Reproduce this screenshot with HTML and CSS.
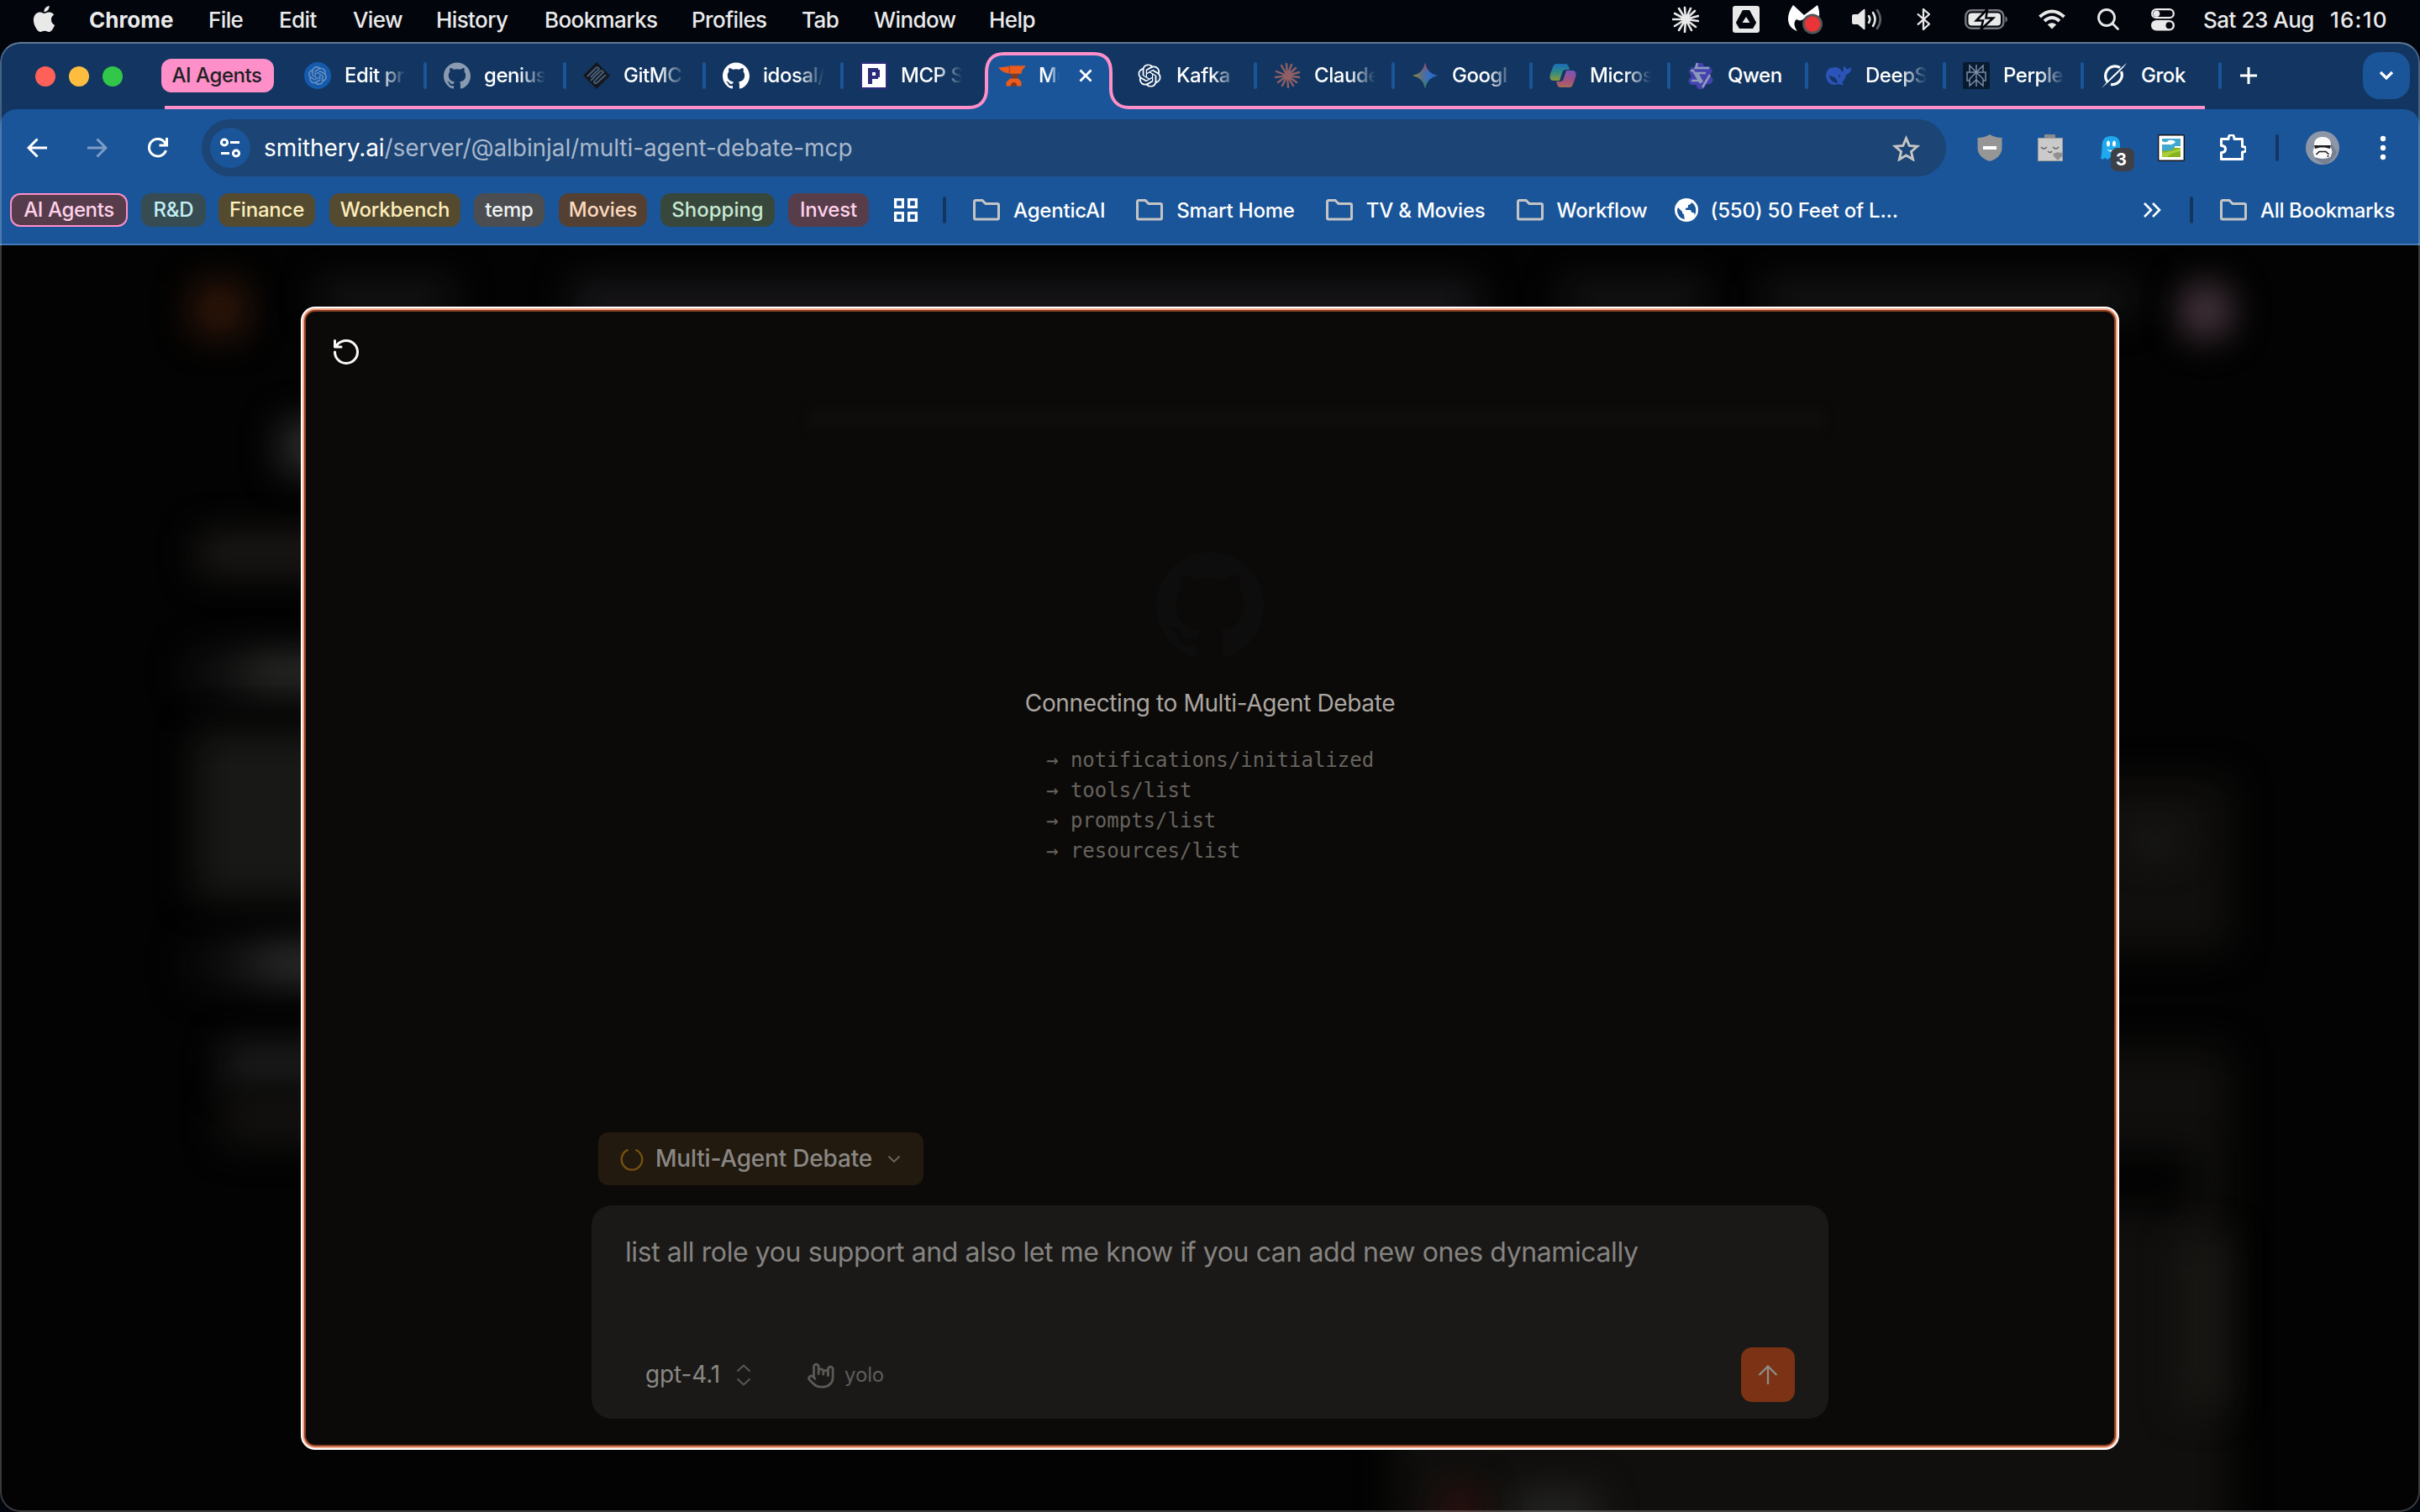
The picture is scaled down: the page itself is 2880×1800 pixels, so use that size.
FILE: index.html
```html
<!DOCTYPE html>
<html lang="en">
<head>
<meta charset="utf-8">
<title>Multi-Agent Debate</title>
<link rel="stylesheet" href="styles.css">
</head>
<body>
<svg class="defs" width="0" height="0" aria-hidden="true">
  <symbol id="github" viewBox="0 0 24 24"><path d="M12 .297c-6.63 0-12 5.373-12 12 0 5.303 3.438 9.8 8.205 11.385.6.113.82-.258.82-.577 0-.285-.01-1.04-.015-2.04-3.338.724-4.042-1.61-4.042-1.61C4.422 18.07 3.633 17.7 3.633 17.7c-1.087-.744.084-.729.084-.729 1.205.084 1.838 1.236 1.838 1.236 1.07 1.835 2.809 1.305 3.495.998.108-.776.417-1.305.76-1.605-2.665-.3-5.466-1.332-5.466-5.93 0-1.31.465-2.38 1.235-3.22-.135-.303-.54-1.523.105-3.176 0 0 1.005-.322 3.3 1.23.96-.267 1.98-.399 3-.405 1.02.006 2.04.138 3 .405 2.28-1.552 3.285-1.23 3.285-1.23.645 1.653.24 2.873.12 3.176.765.84 1.23 1.91 1.23 3.22 0 4.61-2.805 5.625-5.475 5.92.42.36.81 1.096.81 2.22 0 1.606-.015 2.896-.015 3.286 0 .315.21.69.825.57C20.565 22.092 24 17.592 24 12.297c0-6.627-5.373-12-12-12"/></symbol>
  <symbol id="openai" viewBox="0 0 24 24"><path d="M22.2819 9.8211a5.9847 5.9847 0 0 0-.5157-4.9108 6.0462 6.0462 0 0 0-6.5098-2.9A6.0651 6.0651 0 0 0 4.9807 4.1818a5.9847 5.9847 0 0 0-3.9977 2.9 6.0462 6.0462 0 0 0 .7427 7.0966 5.98 5.98 0 0 0 .511 4.9107 6.051 6.051 0 0 0 6.5146 2.9001A5.9847 5.9847 0 0 0 13.2599 24a6.0557 6.0557 0 0 0 5.7718-4.2058 5.9894 5.9894 0 0 0 3.9977-2.9001 6.0557 6.0557 0 0 0-.7475-7.0729zm-9.022 12.6081a4.4755 4.4755 0 0 1-2.8764-1.0408l.1419-.0804 4.7783-2.7582a.7948.7948 0 0 0 .3927-.6813v-6.7369l2.02 1.1686a.071.071 0 0 1 .038.052v5.5826a4.504 4.504 0 0 1-4.4945 4.4944zm-9.6607-4.1254a4.4708 4.4708 0 0 1-.5346-3.0137l.142.0852 4.783 2.7582a.7712.7712 0 0 0 .7806 0l5.8428-3.3685v2.3324a.0804.0804 0 0 1-.0332.0615L9.74 19.9502a4.4992 4.4992 0 0 1-6.1408-1.6464zM2.3408 7.8956a4.485 4.485 0 0 1 2.3655-1.9728V11.6a.7664.7664 0 0 0 .3879.6765l5.8144 3.3543-2.0201 1.1685a.0757.0757 0 0 1-.071 0l-4.8303-2.7865A4.504 4.504 0 0 1 2.3408 7.872zm16.5963 3.8558L13.1038 8.364 15.1192 7.2a.0757.0757 0 0 1 .071 0l4.8303 2.7913a4.4944 4.4944 0 0 1-.6765 8.1042v-5.6772a.79.79 0 0 0-.407-.667zm2.0107-3.0231l-.142-.0852-4.7735-2.7818a.7759.7759 0 0 0-.7854 0L9.409 9.2297V6.8974a.0662.0662 0 0 1 .0284-.0615l4.8303-2.7866a4.4992 4.4992 0 0 1 6.6802 4.66zM8.3065 12.863l-2.02-1.1638a.0804.0804 0 0 1-.038-.0567V6.0742a4.4992 4.4992 0 0 1 7.3757-3.4537l-.142.0805L8.704 5.459a.7948.7948 0 0 0-.3927.6813zm1.0976-2.3654l2.602-1.4998 2.6069 1.4998v2.9994l-2.5974 1.4997-2.6067-1.4997Z"/></symbol>
  <symbol id="folder" viewBox="0 0 32 32"><path d="M1.500 25.500V6a1.500 1.500 0 0 1 1.500-1.500H11l4 4H29a1.500 1.500 0 0 1 1.500 1.500V25.500a1.500 1.500 0 0 1-1.500 1.500H3a1.500 1.500 0 0 1-1.500-1.500Z" fill="none" stroke="#c5c5c5" stroke-width="3"/></symbol>
</svg>

<header class="menubar">
  <nav class="menus">
    <svg class="apple" viewBox="0 0 24 24"><path fill="#e9e9ea" d="M12.152 6.896c-.948 0-2.415-1.078-3.96-1.04-2.04.027-3.91 1.183-4.961 3.014-2.117 3.675-.546 9.103 1.519 12.09 1.013 1.454 2.208 3.09 3.792 3.039 1.52-.065 2.09-.987 3.935-.987 1.831 0 2.35.987 3.96.948 1.637-.026 2.676-1.48 3.676-2.948 1.156-1.688 1.636-3.325 1.662-3.415-.039-.013-3.182-1.221-3.22-4.857-.026-3.04 2.48-4.494 2.597-4.559-1.429-2.09-3.623-2.324-4.39-2.376-2-.156-3.675 1.09-4.61 1.09zM15.53 3.83c.843-1.012 1.4-2.427 1.245-3.83-1.207.052-2.662.805-3.532 1.818-.78.896-1.454 2.338-1.273 3.714 1.338.104 2.715-.688 3.559-1.701"/></svg>
    <b>Chrome</b><span>File</span><span>Edit</span><span>View</span><span>History</span><span>Bookmarks</span><span>Profiles</span><span>Tab</span><span>Window</span><span>Help</span>
  </nav>
  <div class="status">
    <svg width="32" height="32" viewBox="-16 -16 32 32" stroke="#e9e9ea" stroke-width="2.600" stroke-linecap="round"><path d="M0 0L-1 -14M0 0L6 -13M0 0L11 -10M0 0L15 -4M0 0L15 2M0 0L12 9M0 0L7 13M0 0L-1 15M0 0L-8 13M0 0L-13 8M0 0L-15 0M0 0L-13 -7M0 0L-8 -13"/></svg>
    <svg width="32" height="32" viewBox="0 0 32 32"><rect width="32" height="32" rx="3" fill="#e9e9ea"/><path d="M12.500 6h7l7.500 14-3.500 6h-15L5 20Z" fill="#02050c" stroke="#02050c" stroke-width="2" stroke-linejoin="round"/><path d="M16 13l4.500 7h-9Z" fill="#e9e9ea"/></svg>
    <svg width="42" height="36" viewBox="0 0 42 36"><path d="M7 1C-3 15 0 28 12 32c-5-6-4-12-1-14 3 2 6 2 9-1 4 4 4 10 1 15 14-3 21-15 15-31L20 13Z" fill="#fff"/><circle cx="30" cy="23.500" r="12" fill="#555557"/><circle cx="30" cy="23.500" r="9.300" fill="#e93538"/></svg>
    <svg width="36" height="26" viewBox="0 0 36 26" fill="none" stroke="#e9e9ea" stroke-width="2.600" stroke-linecap="round"><path d="M0 9q0-2 2-2h5L14 1q1.500-1 1.500 1V24q0 2-1.500 1L7 19H2q-2 0-2-2Z" fill="#e9e9ea" stroke="none"/><path d="M20 9q2.500 4 0 8"/><path d="M25 5q5 8 0 16"/><path d="M30 2q7.500 11 0 22" stroke="#5d6067"/></svg>
    <svg width="16" height="28" viewBox="0 0 16 28" fill="none" stroke="#e9e9ea" stroke-width="2.300" stroke-linejoin="round"><path d="M1 7.500L15 19.500L8 26V2L15 8L1 20.500"/></svg>
    <svg width="52" height="26" viewBox="0 0 52 26"><rect x="1.300" y="2.300" width="45" height="21.500" rx="7" fill="none" stroke="#77797e" stroke-width="2.400"/><rect x="4.500" y="5.500" width="38.500" height="15" rx="4" fill="#e9e9ea"/><path d="M48.500 9q5 4 0 8Z" fill="#77797e"/><path d="M27 1L14 14.500h8L19.500 25 34 11.500h-8.500Z" fill="#e9e9ea" stroke="#02050c" stroke-width="2.600"/></svg>
    <svg width="32" height="26" viewBox="0 0 32 26" fill="none" stroke="#e9e9ea" stroke-width="4"><path d="M1.500 10Q16-3 30.500 10"/><path d="M7 15Q16 7 25 15"/><path d="M10.800 19.300Q16 15 21.200 19.300L16 24.500Z" fill="#e9e9ea" stroke="none"/></svg>
    <svg width="28" height="28" viewBox="0 0 28 28" fill="none" stroke="#e9e9ea" stroke-width="2.800" stroke-linecap="round"><circle cx="12" cy="12" r="9.500"/><path d="M19 19l6.500 6.500"/></svg>
    <svg width="28" height="28" viewBox="0 0 28 28"><rect x="1.200" y="2.200" width="25.600" height="10" rx="5" fill="none" stroke="#e9e9ea" stroke-width="2.300"/><circle cx="6.500" cy="7.200" r="3.800" fill="#e9e9ea"/><rect y="15" width="28" height="12.500" rx="6.200" fill="#e9e9ea"/><circle cx="21.500" cy="21.200" r="4" fill="#02050c"/></svg>
    <span class="date">Sat 23 Aug</span><span class="time">16:10</span>
  </div>
</header>

<div class="window">
  <div class="tabstrip">
    <svg class="outline" width="2880" height="80" viewBox="0 50 2880 80"><path d="M1153 130C1168 128 1175 118 1175 104V86C1175 72 1181 64 1195 64H1302C1316 64 1322 72 1322 86V104C1322 118 1329 128 1344 130Z" fill="#1a5599"/><path d="M196 128H1153C1168 128 1174 118 1174 106V86C1174 72 1181 64 1195 64H1302C1316 64 1322 72 1322 86V106C1322 118 1329 128 1344 128H2624" fill="none" stroke="#ff8fc8" stroke-width="4"/></svg>
    <div class="lights"><i class="red"></i><i class="amber"></i><i class="green"></i></div>
    <span class="group">AI Agents</span>
    <div class="tabs">
      <div class="tab"><svg viewBox="0 0 32 32"><circle cx="16" cy="16" r="16" fill="#145bad"/><use href="#openai" x="5" y="5" width="22" height="22" fill="#6f93c0"/></svg><span>Edit pr</span></div>
      <div class="tab"><svg fill="#8a9bb0"><use href="#github"/></svg><span>genius</span></div>
      <div class="tab"><svg viewBox="0 0 32 32"><path d="M16 0L32 16 16 32 0 16Z" fill="#14171c"/><path d="M5 17L15 7q3-2 4 1L9 18M9 22L20 11q3-2 4 1L13 23q0 3 3 2L27 15" fill="none" stroke="#49607d" stroke-width="1.800"/></svg><span>GitMC</span></div>
      <div class="tab"><svg fill="#fff"><use href="#github"/></svg><span>idosal/</span></div>
      <div class="tab before"><svg viewBox="0 0 32 32"><rect x="1" y="1" width="30" height="30" fill="#fff" stroke="#2d2c7c" stroke-width="2"/><path d="M9 7h12v2h2v9h-2v2h-7v6H9Zm5 5v4h4v-4Z" fill="#2d2c7c" fill-rule="evenodd"/></svg><span>MCP S</span></div>
      <div class="tab active"><svg viewBox="0 0 32 32"><path d="M0 6.500L13 5V4.200H32V6Q28 8 27.500 13.800H17Q6 14 0 6.500Z" fill="#ea5b1c"/><path d="M13.300 5v8.500" stroke="#a8421a" stroke-width="1"/><path d="M14 14h11l-2.500 5.500h-6Z" fill="#7f3a22"/><path d="M14 19.500h10q2.500 3 3.500 4v5H22q-3.500-5-7 0H9.500v-5Q12 22 14 19.500Z" fill="#ea5b1c"/><path d="M14.500 28.500q1-4.500 4-4.500t4 4.500Z" fill="#8d3518"/></svg><span>Mu</span><svg class="close" viewBox="0 0 16 16"><path d="M1.500 1.500l13 13m0-13l-13 13" stroke="#fff" stroke-width="2.800"/></svg></div>
      <div class="tab"><svg fill="#fff" viewBox="-2 -2 28 28"><use href="#openai" width="24" height="24"/></svg><span>Kafka</span></div>
      <div class="tab"><svg viewBox="-16 -16 32 32" stroke="#8f5f64" stroke-width="2.400" stroke-linecap="round"><path d="M0 0L-1-14M0 0L5-13M0 0L10-9M0 0L14-4M0 0L14 2M0 0L11 8M0 0L7 12M0 0L1 14M0 0L-6 12M0 0L-11 8M0 0L-14 2M0 0L-13-5M0 0L-7-12"/></svg><span>Claude</span></div>
      <div class="tab"><svg viewBox="0 0 32 32"><defs><linearGradient id="gem" x1="0" y1="0" x2="1" y2="0"><stop offset="0" stop-color="#9a8a36"/><stop offset=".35" stop-color="#5c6f83"/><stop offset=".6" stop-color="#3a6fc0"/><stop offset="1" stop-color="#2461b4"/></linearGradient><linearGradient id="gem2" x1="0" y1="0" x2="0" y2="1"><stop offset="0" stop-color="#a4485d"/><stop offset=".4" stop-color="#a4485d" stop-opacity="0"/><stop offset=".65" stop-color="#27894d" stop-opacity="0"/><stop offset="1" stop-color="#27894d"/></linearGradient></defs><path d="M16 1Q18.500 13.500 31 16 18.500 18.500 16 31 13.500 18.500 1 16 13.500 13.500 16 1Z" fill="url(#gem)"/><path d="M16 1Q18.500 13.500 31 16 18.500 18.500 16 31 13.500 18.500 1 16 13.500 13.500 16 1Z" fill="url(#gem2)"/></svg><span>Googl</span></div>
      <div class="tab"><svg viewBox="0 0 32 32"><defs><linearGradient id="coa" x1="0" y1="0" x2="0" y2="1"><stop offset="0" stop-color="#1c6cb8"/><stop offset=".5" stop-color="#2f8b86"/><stop offset="1" stop-color="#8b9a3c"/></linearGradient><linearGradient id="cob" x1="0" y1="0" x2="0" y2="1"><stop offset="0" stop-color="#7a56b8"/><stop offset=".6" stop-color="#a2507f"/><stop offset="1" stop-color="#aa6a58"/></linearGradient></defs><path d="M8 2h11q3 0 4 4l1 3h-5q-3 0-4 4l-3 9H5Q-1 22 1 14L4 6Q5 2 8 2Z" fill="url(#coa)"/><path d="M24 30H13q-3 0-4-4l-1-3h5q3 0 4-4l3-9h7q6 0 4 8l-3 8q-1 4-4 4Z" fill="url(#cob)"/></svg><span>Micros</span></div>
      <div class="tab whole"><svg viewBox="0 0 32 32"><path d="M12 1h6l2 4h7l3 6-3 4 4 6-3 5h-5l-4 6h-6l-3-5H4l-3-5 4-5-3-6 3-5h5Z" fill="#4542b0"/><path d="M12 1l-2 6h16M27 15l-9 15M16 25L7 10H4m1 12h9m8-9H12l6 11" fill="none" stroke="#8e9cba" stroke-width="2.600"/></svg><span>Qwen</span></div>
      <div class="tab"><svg viewBox="0 0 32 32"><path d="M1 17Q1 6 12 6q5 0 8 5 2 1 2-2-1-5 1-4 2 4 5 3 3-3 3-1 0 6-6 8-1 6-5 9 3 2 1 3-3 0-5-1Q3 30 1 17Zm4-1q1 6 6 8 3 2 4 0-2-7-10-8Zm11-1q0 3 2 3 1-2-2-3Z" fill="#2c53b8" fill-rule="evenodd"/></svg><span>DeepS</span></div>
      <div class="tab"><svg viewBox="0 0 32 32"><rect width="32" height="32" rx="2" fill="#071a30"/><path d="M16 3v26M8 4l8 8 8-8v8H8ZM8 12H5v10h3M24 12h3v10h-3M16 12l-8 8v8l8-7 8 7v-8Z" fill="none" stroke="#788ba4" stroke-width="1.500"/></svg><span>Perple</span></div>
      <div class="tab whole"><svg viewBox="0 0 32 32"><path d="M8.500 24A11.500 11.500 0 0 1 23 6.500M24.500 11A11.500 11.500 0 0 1 12 26.500" fill="none" stroke="#fff" stroke-width="3.200"/><path d="M31 1Q26 9 1 31 14 15 31 1Z" fill="#fff"/></svg><span>Grok</span></div>
    </div>
    <svg class="plus" viewBox="0 0 22 22"><path d="M11 1v20M1 11h20" stroke="#fff" stroke-width="3"/></svg>
    <div class="tabsearch"><svg width="18" height="12" viewBox="0 0 18 12"><path d="M2 2l7 7 7-7" fill="none" stroke="#fff" stroke-width="3.200"/></svg></div>
  </div>

  <div class="chrome">
    <div class="toolbar">
      <div class="navbtns">
        <svg viewBox="0 0 24 24" stroke="#fff"><path d="M24 12H2M12.500 1.500L2 12l10.500 10.500"/></svg>
        <svg viewBox="0 0 24 24" stroke="#7d9dc5"><path d="M0 12h22M11.500 1.500L22 12 11.500 22.500"/></svg>
        <svg viewBox="0 0 24 24" stroke="#fff"><path d="M21.500 15A10.300 10.300 0 1 1 20 5.500L22.500 8.500M22.500 0V9H13.500"/></svg>
      </div>
      <div class="omnibox">
        <span class="siteinfo"><svg width="26" height="24" viewBox="0 0 26 24" fill="none" stroke="#fff" stroke-width="3"><circle cx="6" cy="5.500" r="3.600"/><path d="M13 5.500h11M2 18.500h10"/><circle cx="20" cy="18.500" r="3.600"/></svg></span>
        <span class="url">smithery.ai<em>/server/@albinjal/multi-agent-debate-mcp</em></span>
        <svg class="star" viewBox="0 0 32 30"><path d="M16 3.500l3.600 8.500 9.200.8-7 6.100 2.100 9L16 23.200 8.100 27.900l2.100-9-7-6.100 9.200-.8Z" fill="none" stroke="#c5c5c5" stroke-width="2.800"/></svg>
      </div>
      <div class="exts">
        <svg viewBox="0 0 32 32"><path d="M16 0q6 4 14.500 4V16q0 11-14.500 16Q1.500 27 1.500 16V4Q10 4 16 0Z" fill="#969696"/><rect x="8" y="14" width="16" height="4" fill="#fff"/></svg>
        <svg viewBox="0 0 32 32"><rect x="9" width="13" height="6" rx="1" fill="#8b8b8b"/><rect x="1.500" y="4.500" width="29" height="27" fill="#cacaca" stroke="#9c9c9c"/><path d="M5 15q3 4 7 0M19 15q4 4 7 0M13 20q3 3 5 0" fill="none" stroke="#6a6a6a" stroke-width="1.600"/><path d="M25 31l-5-5q-2-4 3-4 2-2 4 0 5-1 4 3Z" fill="#919191"/></svg>
        <div class="ghost"><svg viewBox="0 0 32 32"><path d="M4 28Q5.500 24 5.500 13 6 2 16.500 2T27 13V28l-7 1-4-2-4 3-3-2-3 2Z" fill="#1fa8ee"/><ellipse cx="13" cy="11" rx="2" ry="3.500" fill="#fff"/><ellipse cx="20" cy="11" rx="2" ry="3.500" fill="#fff"/><path d="M11 17q5 4 10 0-5 7-10 0Z" fill="#fff"/></svg><b>3</b></div>
        <svg viewBox="0 0 32 32"><rect x=".7" y=".7" width="30.600" height="30.600" rx="1" fill="#fff" stroke="#111" stroke-width="1.400"/><rect x="5" y="5" width="22" height="22" fill="#42a9cd"/><path d="M5 8q5 3 8-1 6-1 8 2-3 4-7 3H5Zm15 6h7v3h-7Z" fill="#fff"/><path d="M5 19q12 2 14-3h8v11H5Z" fill="#88b31e"/><path d="M5 22q12-2 22-5v3q-12 2-16 7H5Z" fill="#a9d03a"/></svg>
        <svg viewBox="0 0 32 32"><path d="M2.500 5.500h8.500q0-5 3.500-5t3.500 5h9.500v9q4.500 0 4.500 3.200T27.500 21v8.500h-25V21.500q5 0 5-4t-5-4Z" fill="none" stroke="#fff" stroke-width="3" stroke-linejoin="round"/></svg>
      </div>
      <i class="bar"></i>
      <svg class="avatar" viewBox="0 0 40 40"><circle cx="20" cy="20" r="20" fill="#8d96a6"/><path d="M30 14l7 11q-4 11-15 15L11 33Z" fill="#777f91"/><path d="M10 19Q9 7 20 7t10 12l1.500 6-2 6q-9 4-19 0l-2-6Z" fill="#fafafa"/><path d="M10 17h20l-1 4-6-1.500h-6L11 21Z" fill="#1d1d1f"/><path d="M12.500 28l3.500-3.500h8l3.500 3.500" fill="none" stroke="#1d1d1f" stroke-width="1.600"/><circle cx="26.500" cy="30" r="1" fill="#1d1d1f"/></svg>
      <svg class="dots" viewBox="0 0 8 30"><g fill="#fff"><circle cx="4" cy="4" r="3.200"/><circle cx="4" cy="15" r="3.200"/><circle cx="4" cy="26" r="3.200"/></g></svg>
    </div>

    <div class="bookmarks">
      <span class="chip pink">AI Agents</span><span class="chip cyan">R&amp;D</span><span class="chip yellow">Finance</span><span class="chip yellow wide">Workbench</span><span class="chip grey">temp</span><span class="chip orange">Movies</span><span class="chip green">Shopping</span><span class="chip rose">Invest</span>
      <svg class="apps" viewBox="0 0 28 28" fill="none" stroke="#fff" stroke-width="3.200"><rect x="1.600" y="1.600" width="8.800" height="8.800"/><rect x="17.600" y="1.600" width="8.800" height="8.800"/><rect x="1.600" y="17.600" width="8.800" height="8.800"/><rect x="17.600" y="17.600" width="8.800" height="8.800"/></svg>
      <i class="bar"></i>
      <span class="bm"><svg><use href="#folder"/></svg>AgenticAI</span>
      <span class="bm"><svg><use href="#folder"/></svg>Smart Home</span>
      <span class="bm"><svg><use href="#folder"/></svg>TV &amp; Movies</span>
      <span class="bm"><svg><use href="#folder"/></svg>Workflow</span>
      <span class="bm site"><svg viewBox="0 0 28 28"><circle cx="14" cy="14" r="14" fill="#fff"/><path d="M3 15q0-3 1-4l5 5v2q2 0 2 2l1 5Q4 24 3 15ZM20 5q-1 3-4 3v3l-3 1v2h5q2 0 2 3h2q2 0 1.500 3Q26 17 25 12q-1-5-5-7Z" fill="#1a5599"/></svg>(550) 50 Feet of L...</span>
      <svg class="more" viewBox="0 0 22 18"><path d="M2 1l8 8-8 8M12 1l8 8-8 8" fill="none" stroke="#fff" stroke-width="2.600"/></svg>
      <i class="bar"></i>
      <span class="bm"><svg><use href="#folder"/></svg>All Bookmarks</span>
    </div>
  </div>

  <main class="page">
    <div class="backdrop" aria-hidden="true">
      <i class="logo"></i><i class="search"></i><i class="link a"></i><i class="link b"></i><i class="link c"></i><i class="user"></i>
      <i class="title"></i><i class="line l1"></i><i class="line l2"></i><i class="para"></i><i class="line l3"></i><i class="line l4"></i><i class="line l5"></i>
      <i class="card c1"></i><i class="card c2"></i><i class="card slot"></i><i class="card c3"></i><i class="hint"></i><i class="foot"></i><i class="foot dot"></i>
    </div>
    <section class="modal">
      <i class="trace"></i>
      <svg class="restart" viewBox="0 0 24 24"><path d="M3 12a9 9 0 1 0 9-9 9.750 9.750 0 0 0-6.740 2.740L3 8M3 3v5h5"/></svg>
      <div class="connect">
        <svg class="mark" fill="#0e0d0d"><use href="#github"/></svg>
        <h1>Connecting to Multi-Agent Debate</h1>
        <ul><li>→ notifications/initialized</li><li>→ tools/list</li><li>→ prompts/list</li><li>→ resources/list</li></ul>
      </div>
      <div class="composer">
        <div class="server"><svg width="28" height="28" viewBox="0 0 28 28"><path d="M8.800 3.200A12.300 12.300 0 1 0 19.200 3.200" fill="none" stroke="#76500f" stroke-width="2.400" stroke-linecap="round"/></svg><span>Multi-Agent Debate</span><svg width="16" height="10" viewBox="0 0 16 10"><path d="M1.500 1.500L8 8l6.500-6.500" fill="none" stroke="#6b655c" stroke-width="1.900"/></svg></div>
        <div class="inputbox">
          <p>list all role you support and also let me know if you can add new ones dynamically</p>
          <div class="actions">
            <span class="model">gpt-4.1</span>
            <svg class="updown" viewBox="0 0 18 26"><path d="M1.500 8.500L9 1.500l7.500 7M1.500 17.500L9 24.500l7.500-7"/></svg>
            <svg class="hand" viewBox="0 0 24 24"><path d="M18 12.500V10a2 2 0 0 0-2-2a2 2 0 0 0-2 2v1.400M14 11V9a2 2 0 1 0-4 0v2M10 10.500V5a2 2 0 1 0-4 0v9"/><path d="m7 15-1.760-1.760a2 2 0 0 0-2.830 2.820l3.600 3.600C7.500 21.140 9.200 22 12 22h2a8 8 0 0 0 8-8V7a2 2 0 1 0-4 0v5"/></svg>
            <span class="yolo">yolo</span>
            <button class="send"><svg width="24" height="24" viewBox="0 0 24 24"><path d="M12 23V2M1.500 12L12 1.500 22.500 12" fill="none" stroke="#8f8c88" stroke-width="2.300"/></svg></button>
          </div>
        </div>
      </div>
    </section>
  </main>
</div>
</body>
</html>
```
FILE: styles.css
```css
* { box-sizing: border-box; }
body {
  margin: 0;
  width: 2880px;
  height: 1800px;
  display: flex;
  flex-direction: column;
  overflow: hidden;
  background: #02050c;
  color: #fff;
  font-family: Inter, "Liberation Sans", sans-serif;
  font-size: 24px;
  font-weight: 500;
}
i { display: block; }
svg { display: block; flex: none; }
.defs { position: absolute; }

/* system menu bar */
.menubar {
  height: 50px;
  flex: none;
  display: flex;
  justify-content: space-between;
  padding: 0 38px 4px 36px;
  font-size: 26px;
  letter-spacing: -.6px;
  color: #eaeaeb;
}
.menus {
  display: grid;
  grid-template-columns: 70px 142px 84px 88px 99px 129px 175px 131px 86px 137px 60px;
  align-items: center;
  white-space: nowrap;
}
.menus b { letter-spacing: 0; }
.apple { width: 31px; height: 31px; margin-top: -2px; margin-left: 1px; }
.status {
  display: grid;
  grid-template-columns: 72px 65px 77px 77px 57px 88px 69px 65px 62px 151px 69px;
  align-items: center;
  white-space: nowrap;
}
.date { letter-spacing: -.48px; }
.time { letter-spacing: 1.2px; }

/* browser window */
.window {
  flex: 1;
  display: flex;
  flex-direction: column;
  position: relative;
  overflow: hidden;
  background: #123661;
  border-radius: 24px;
}
.window::after {
  content: "";
  position: absolute;
  inset: 0;
  border: 2px solid rgba(255, 255, 255, .22);
  border-top-color: rgba(255, 255, 255, .33);
  border-radius: 24px;
}
.tabstrip {
  height: 80px;
  flex: none;
  display: flex;
  align-items: flex-start;
  position: relative;
  letter-spacing: -.45px;
}
.outline { position: absolute; left: 0; top: 0; }
.lights { display: flex; gap: 16px; margin: 29px 0 0 42px; width: 150px; }
.lights i { width: 24px; height: 24px; border-radius: 50%; }
.red { background: #ff6058; }
.amber { background: #ffbd3f; }
.green { background: #32c748; }
.group {
  margin: 20px 36px 0 0;
  padding-right: 2px;
  width: 134px;
  height: 40px;
  line-height: 39px;
  text-align: center;
  border-radius: 12px;
  background: #ff8fc8;
  color: #202124;
}
.tabs { display: flex; margin-top: 24px; position: relative; }
.tab {
  width: 164px;
  height: 32px;
  display: flex;
  align-items: center;
  padding-right: 20px;
}
.tab:nth-child(-n+3) { width: 166px; }
.tab > svg { width: 32px; height: 32px; }
.tab > span {
  width: 74px;
  margin: 0 auto 0 16px;
  line-height: 32px;
  white-space: nowrap;
  -webkit-mask-image: linear-gradient(90deg, #000 42px, transparent 73px);
  mask-image: linear-gradient(90deg, #000 42px, transparent 73px);
}
.tab.whole > span { -webkit-mask-image: none; mask-image: none; }
.tab::after {
  content: "";
  width: 4px;
  height: 32px;
  border-radius: 2px;
  background: #1a5599;
}
.tab.active::after, .tab.before::after { display: none; }
.tab.active { padding-right: 52px; }
.tab.active > span {
  width: 25px;
  -webkit-mask-image: linear-gradient(90deg, #000 12px, transparent 25px);
  mask-image: linear-gradient(90deg, #000 12px, transparent 25px);
}
.tab.active .close { width: 16px; height: 16px; }
.plus { width: 22px; height: 22px; margin: 29px 125px 0 1px; position: relative; }
.tabsearch {
  width: 56px;
  height: 56px;
  margin-top: 12px;
  border-radius: 20px;
  background: #1a5599;
  display: flex;
  align-items: center;
  justify-content: center;
}

.chrome {
  height: 162px;
  flex: none;
  background: #1a5599;
  border-bottom: 2px solid #4377b5;
  border-radius: 20px 20px 0 0;
}
.toolbar { height: 92px; display: flex; align-items: center; }
.navbtns { display: flex; gap: 48px; margin-left: 32px; width: 208px; }
.navbtns svg { width: 24px; height: 24px; fill: none; stroke-width: 3; }
.omnibox {
  width: 2076px;
  height: 68px;
  border-radius: 34px;
  background: #1c4474;
  display: flex;
  align-items: center;
  padding: 0 31px 0 10px;
}
.siteinfo {
  width: 48px;
  height: 48px;
  border-radius: 50%;
  background: #1a5599;
  display: flex;
  align-items: center;
  justify-content: center;
}
.url { margin-left: 16px; flex: 1; font-size: 28px; font-weight: 400; letter-spacing: -.06px; }
.url em { font-style: normal; color: #a9b9cd; }
.star { width: 33px; height: 31px; }
.exts { display: flex; gap: 40px; margin-left: 36px; }
.exts svg { width: 32px; height: 32px; }
.exts > svg:last-child { margin-left: 1px; }
.ghost { position: relative; }
.ghost b {
  position: absolute;
  left: 16px;
  top: 16px;
  width: 28px;
  height: 28px;
  border-radius: 8px;
  background: #3e4047;
  font-size: 20px;
  line-height: 28px;
  text-align: center;
  padding-right: 3px;
}
.bar { width: 4px; height: 32px; border-radius: 2px; background: #123661; }
.toolbar .bar { margin-left: 35px; }
.avatar { width: 40px; height: 40px; margin-left: 32px; }
.dots { width: 8px; height: 30px; margin-left: 48px; }

.bookmarks {
  height: 56px;
  display: flex;
  align-items: center;
  letter-spacing: -.2px;
  white-space: nowrap;
  padding: 0 30px 0 12px;
}
.chip {
  height: 40px;
  line-height: 39px;
  text-align: center;
  border-radius: 12px;
  margin-right: 16px;
  flex: none;
}
.chip.pink { width: 140px; background: #573d4c; color: #ffd2ea; border: 2px solid #ff8fc8; line-height: 36px; letter-spacing: -.4px; }
.chip.cyan { width: 77px; background: #364c52; color: #c4eef5; margin-right: 15px; }
.chip.yellow { width: 115px; background: #544a30; color: #fdeebb; margin-right: 17px; }
.chip.wide { width: 156px; margin-right: 16px; }
.chip.grey { width: 84px; background: #4b4d50; color: #f1f3f4; margin-right: 17px; }
.chip.orange { width: 105px; background: #534033; color: #fbd9bf; }
.chip.green { width: 136px; background: #37473c; color: #c8e8d0; letter-spacing: 0; }
.chip.rose { width: 96px; background: #573d4a; color: #ffd2ea; margin-right: 30px; }
.apps { width: 28px; height: 28px; }
.bookmarks .bar { margin: 0 32px 0 30px; }
.bm { display: flex; align-items: center; gap: 16px; margin-right: 37px; }
.bm svg { width: 32px; height: 32px; }
.bm.site svg { width: 28px; height: 28px; }
.bm.site { margin-right: auto; margin-left: -5px; gap: 15px; }
.more { width: 22px; height: 18px; margin-right: 4px; }
.bm:last-child { margin-right: 0; letter-spacing: -.36px; }

/* dimmed site behind the dialog */
.page { flex: 1; position: relative; background: #030303; padding: 79px 364px 80px; display: flex; overflow: hidden; }
.backdrop, .backdrop i { position: absolute; }
.backdrop { inset: 0; }
.backdrop i { filter: blur(22px); }
.backdrop .logo { left: 231px; top: 46px; width: 60px; height: 60px; background: #351809; }
.backdrop .search { left: 680px; top: 40px; width: 1080px; height: 60px; background: #171518; }
.backdrop .link { top: 42px; height: 40px; background: #151515; }
.backdrop .a { left: 380px; width: 160px; }
.backdrop .b { left: 1860px; width: 170px; }
.backdrop .c { left: 2100px; width: 440px; }
.backdrop .user { left: 2594px; top: 45px; width: 62px; height: 66px; border-radius: 50%; background: #4e3b45; }
.backdrop .title { left: 335px; top: 210px; width: 120px; height: 60px; background: #2e2e2d; }
.backdrop .line { height: 46px; }
.backdrop .l1 { left: 236px; top: 344px; width: 170px; background: #1d1b18; }
.backdrop .l2 { left: 225px; top: 486px; width: 180px; background: linear-gradient(90deg, #101010 20%, #2c2c2a 50%); }
.backdrop .para { left: 232px; top: 578px; width: 180px; height: 200px; background: #181816; }
.backdrop .l3 { left: 225px; top: 832px; width: 180px; background: linear-gradient(90deg, #0d0d0d 20%, #2f2f2f 60%); }
.backdrop .l4 { left: 264px; top: 952px; width: 150px; background: #202020; }
.backdrop .l5 { left: 264px; top: 1010px; width: 150px; height: 60px; background: #131210; }
.backdrop .card { left: 1660px; width: 994px; background: #100f0d; }
.backdrop .c1 { top: 636px; height: 204px; }
.backdrop .c2 { top: 956px; height: 700px; }
.backdrop .slot { top: 1082px; height: 62px; width: 950px; background: #010102; }
.backdrop .c3 { left: 2594px; width: 56px; top: 1180px; height: 205px; background: #181714; }
.backdrop .hint { left: 2540px; top: 694px; width: 50px; height: 30px; background: #1c1c19; }
.backdrop .foot { left: 1800px; top: 1484px; width: 100px; height: 46px; background: #262624; }
.backdrop .dot { left: 1715px; width: 46px; background: #33100f; }

.modal {
  position: relative;
  flex: 1;
  display: flex;
  flex-direction: column;
  align-items: center;
  background: #0b0a08;
  border-radius: 11px;
  box-shadow: 0 0 0 2px #8e4223, 0 0 0 4px #f6ab8d, 0 0 0 6px #fff;
}
.trace {
  position: absolute;
  left: 600px;
  top: 118px;
  width: 1206px;
  height: 20px;
  background: #0f0e0c;
  filter: blur(6px);
}
.restart {
  align-self: flex-start;
  width: 36px;
  height: 36px;
  margin: 30px 0 0 30px;
  fill: none;
  stroke: #fafafa;
  stroke-width: 2;
  stroke-linecap: round;
  stroke-linejoin: round;
}
.connect { margin-top: 219px; display: flex; flex-direction: column; align-items: center; }
.mark { width: 128px; height: 128px; }
h1 { margin: 35px 0 0; font-size: 28px; line-height: 36px; font-weight: 430; letter-spacing: -.36px; color: #aba6a1; }
ul {
  list-style: none;
  margin: 32px 0 0 1px;
  padding: 0;
  width: 391px;
  font: 24px/36px "DejaVu Sans Mono", monospace;
  color: #67635f;
}
.composer { width: 1472px; margin-top: auto; padding-bottom: 31px; }
.server {
  width: 387px;
  height: 63px;
  margin: 0 0 24px 8px;
  padding-left: 26px;
  display: flex;
  align-items: center;
  border-radius: 12px;
  background: #221a0e;
  font-size: 28px;
  letter-spacing: -.2px;
  color: #8a8784;
}
.server span { margin: -1px 18px 0 14px; }
.inputbox { height: 254px; border-radius: 24px; background: #1a1917; padding: 34px 40px 20px; }
p { margin: 0; font-size: 32px; line-height: 44px; font-weight: 430; letter-spacing: -.4px; color: #858380; }
.actions { display: flex; align-items: center; margin-top: 91px; font-weight: 400; }
.model { margin: -1px 0 0 24px; font-size: 28px; letter-spacing: -.14px; color: #8a8784; }
.updown { width: 18px; height: 26px; margin-left: 19px; }
.updown path, .hand path { fill: none; stroke: #5b5855; stroke-width: 2; }
.hand { width: 34px; height: 34px; margin-left: 66px; stroke-linecap: round; stroke-linejoin: round; }
.yolo { margin: -1px 0 0 11px; letter-spacing: -.15px; color: #605d5a; }
.send {
  margin: 0 0 0 auto;
  width: 64px;
  height: 65px;
  padding: 0;
  border: 0;
  border-radius: 13px;
  background: #7c3214;
  display: flex;
  align-items: center;
  justify-content: center;
}
```
